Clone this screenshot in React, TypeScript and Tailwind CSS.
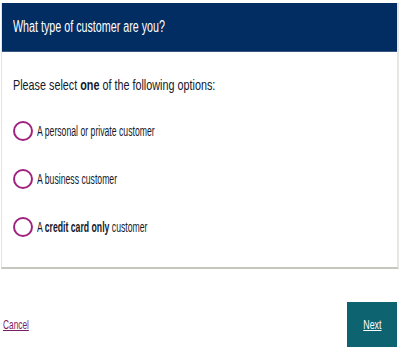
import React from "react";

function Radio() {
  return <span className="block w-[20px] h-[20px] rounded-full border-[2.5px] border-[#a0237f] shrink-0" />;
}

function Sq({ children, className = "" }: { children: React.ReactNode; className?: string }) {
  return <span className={"inline-block whitespace-nowrap origin-left " + className}>{children}</span>;
}

export default function App() {
  return (
    <div className="w-[400px] h-[350px] bg-white font-['Liberation_Sans',Arial,sans-serif] text-[#14192b] flex flex-col">
      <div className="mt-[3px] ml-[1px] w-[398px] border-l border-l-[#e4e4e0] border-r-2 border-r-[#e6e6e2] border-b-2 border-b-[#c6c6bf] flex flex-col">
        <div className="h-[49px] bg-[#022d63] border-b border-b-[#3a5680] flex items-center pl-[11px]">
          <Sq className="text-white text-[16px] scale-x-[0.67]">What type of customer are you?</Sq>
        </div>
        <div className="h-[215px] flex flex-col pl-[11px]">
          <div className="mt-[24px] h-[18px] flex items-center">
            <Sq className="text-[15px] scale-x-[0.72]">Please select <b className="font-bold">one</b> of the following options:</Sq>
          </div>
          <div className="mt-[27px] flex flex-col gap-[28px]">
            <div className="flex items-center gap-[4px] h-[20px]">
              <Radio />
              <Sq className="text-[14px] scale-x-[0.62]">A personal or private customer</Sq>
            </div>
            <div className="flex items-center gap-[4px] h-[20px]">
              <Radio />
              <Sq className="text-[14px] scale-x-[0.62]">A business customer</Sq>
            </div>
            <div className="flex items-center gap-[4px] h-[20px]">
              <Radio />
              <Sq className="text-[14px] scale-x-[0.62]">A <b className="font-bold">credit card only</b> customer</Sq>
            </div>
          </div>
        </div>
      </div>
      <div className="mt-[33px] flex items-center justify-between pl-[3px] pr-[3px]">
        <a href="#" className="text-[13px] text-[#7a1d63]">
          <Sq className="underline scale-x-[0.64]">Cancel</Sq>
        </a>
        <a href="#" className="w-[50px] h-[45px] bg-[#0e6370] flex items-center justify-center text-white text-[13px]">
          <span className="inline-block origin-center scale-x-[0.68] underline">Next</span>
        </a>
      </div>
    </div>
  );
}
